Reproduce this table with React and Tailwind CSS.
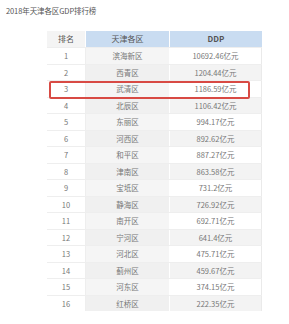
const ROWS = [
  ["1", "滨海新区", "10692.46亿元"],
  ["2", "西青区", "1204.44亿元"],
  ["3", "武清区", "1186.59亿元"],
  ["4", "北辰区", "1106.42亿元"],
  ["5", "东丽区", "994.17亿元"],
  ["6", "河西区", "892.62亿元"],
  ["7", "和平区", "887.27亿元"],
  ["8", "津南区", "863.58亿元"],
  ["9", "宝坻区", "731.2亿元"],
  ["10", "静海区", "726.92亿元"],
  ["11", "南开区", "692.71亿元"],
  ["12", "宁河区", "641.4亿元"],
  ["13", "河北区", "475.71亿元"],
  ["14", "蓟州区", "459.67亿元"],
  ["15", "河东区", "374.15亿元"],
  ["16", "红桥区", "222.35亿元"],
];

export default function App() {
  return (
    <div
      className="w-[289px] h-[324px] bg-white overflow-hidden"
      style={{ fontFamily: '"Noto Sans CJK SC", "Noto Sans", sans-serif' }}
    >
      <div className="pl-[6px] pt-[6px] text-[7.5px] leading-[9px] text-[#555] tracking-[-0.1px]">
        2018年天津各区GDP排行榜
      </div>

      {/* table */}
      <div className="relative ml-[47px] mt-[16px] w-[215px]">
        <div className="grid grid-cols-[39px_84px_92px] h-[16px] text-[8px] text-[#555]">
          <div className="flex items-center justify-center bg-[#f4f4f4] border-r border-white">排名</div>
          <div className="flex items-center justify-center bg-[#c9dcf1] border-r border-white">天津各区</div>
          <div className="flex items-center justify-center bg-[#c9dcf1] font-semibold">DDP</div>
        </div>

        {ROWS.map(([rank, name, gdp], i) => {
          const even = i % 2 === 1;
          return (
            <div
              key={rank}
              className="grid grid-cols-[39px_84px_92px] h-[16.5px] text-[7.5px] text-[#777] border-t border-[#eeeeee]"
            >
              <div className="flex items-center justify-center bg-white border-r border-[#eeeeee]">{rank}</div>
              <div className={`flex items-center justify-center border-r border-white ${even ? "bg-[#f0f0f0]" : "bg-[#f5f5f5]"}`}>
                {name}
              </div>
              <div className={`flex items-center justify-center border-r border-[#eaeaea] ${even ? "bg-[#f3f3f3]" : "bg-white"}`}>
                {gdp}
              </div>
            </div>
          );
        })}

        {/* highlight box around 武清区 */}
        <div className="absolute left-[2px] top-[50px] w-[201px] h-[18px] border-2 border-[#d84a44] rounded-[2px]" />
      </div>
    </div>
  );
}
